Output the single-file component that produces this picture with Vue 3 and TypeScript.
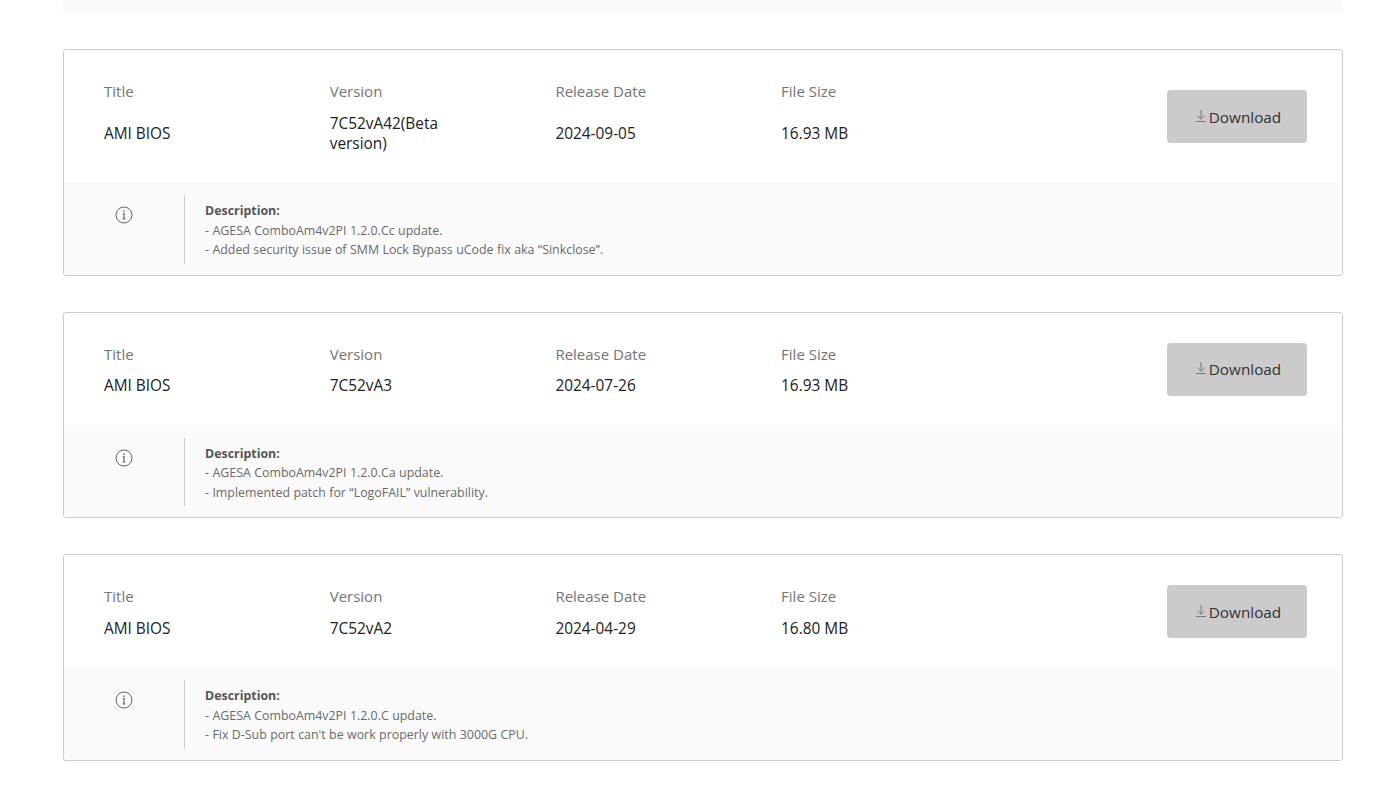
<script setup lang="ts">
interface Item { version: string; date: string; size: string; lines: string[] }
const items: Item[] = [
  { version: '7C52vA42(Beta version)', date: '2024-09-05', size: '16.93 MB', lines: ['- AGESA ComboAm4v2PI 1.2.0.Cc update.', '- Added security issue of SMM Lock Bypass uCode fix aka “Sinkclose”.'] },
  { version: '7C52vA3', date: '2024-07-26', size: '16.93 MB', lines: ['- AGESA ComboAm4v2PI 1.2.0.Ca update.', '- Implemented patch for “LogoFAIL” vulnerability.'] },
  { version: '7C52vA2', date: '2024-04-29', size: '16.80 MB', lines: ['- AGESA ComboAm4v2PI 1.2.0.C update.', '- Fix D-Sub port can\'t be work properly with 3000G CPU.'] },
]
</script>

<template>
  <main class="page">
    <div class="strip"></div>
    <section v-for="item in items" :key="item.version" class="card">
      <div class="top">
        <div class="col">
          <div class="label">Title</div>
          <div class="value">AMI BIOS</div>
        </div>
        <div class="col">
          <div class="label">Version</div>
          <div class="value narrow">{{ item.version }}</div>
        </div>
        <div class="col">
          <div class="label">Release Date</div>
          <div class="value">{{ item.date }}</div>
        </div>
        <div class="col">
          <div class="label">File Size</div>
          <div class="value">{{ item.size }}</div>
        </div>
        <button class="btn" type="button">
          <svg class="dl" viewBox="0 0 12 14" width="12" height="14" fill="none" stroke="#777" stroke-width="1">
            <path d="M6 1v9M2.5 6.8 6 10.2l3.5-3.4M1 12.5h10" />
          </svg>
          <span>Download</span>
        </button>
      </div>
      <div class="desc">
        <div class="icon-cell">
          <svg viewBox="0 0 18 18" width="18" height="18" fill="none" stroke="#666" stroke-width="1">
            <circle cx="9" cy="9" r="8" />
            <path d="M7.8 7.7H9v5.3M7.6 13h2.8" stroke-width="1.2" />
            <path d="M9 4.4v1.6" stroke-width="1.5" />
          </svg>
        </div>
        <div class="text">
          <div class="head">Description:</div>
          <div v-for="line in item.lines" :key="line">{{ line }}</div>
        </div>
      </div>
    </section>
  </main>
</template>

<style scoped>
.page {
  width: 1280px;
  margin-left: 63px;
  font-family: "Open Sans", "Noto Sans", "Liberation Sans", sans-serif;
}
.strip {
  height: 13px;
  background: #fafafa;
}
.card {
  margin-top: 36px;
  border: 1px solid #ccc;
  border-radius: 3px;
  overflow: hidden;
  background: #fff;
}
.top {
  display: flex;
  align-items: stretch;
  padding: 30px 35px 30px 40px;
}
.col {
  flex: 0 0 225.7px;
  display: flex;
  flex-direction: column;
}
.label {
  font-size: 15px;
  line-height: 22px;
  color: #757575;
  margin-bottom: 11.5px;
}
.value {
  flex: 1;
  min-height: 21px;
  margin-bottom: -1.5px;
  display: flex;
  align-items: center;
  font-size: 15.4px;
  line-height: 20.5px;
  color: #222;
}
.narrow {
  max-width: 130px;
}
.btn {
  margin-left: auto;
  align-self: center;
  width: 140px;
  height: 53px;
  border: 0;
  border-radius: 4px;
  background: #cbcbcb;
  color: #333;
  font: inherit;
  font-size: 15.3px;
  display: flex;
  align-items: center;
  justify-content: center;
  gap: 2px;
  padding: 0 0 0 2px;
}
.dl {
  margin-top: -2px;
}
.desc {
  display: flex;
  background: #fafafa;
  padding: 12px 0 11px;
}
.icon-cell {
  flex: 0 0 120px;
  border-right: 1px solid #ccc;
  box-sizing: content-box;
  display: flex;
  justify-content: center;
  align-items: flex-start;
  padding-top: 11px;
}
.text {
  padding: 6px 0 4px 20px;
  font-size: 12.4px;
  line-height: 19.5px;
  word-spacing: 0.2px;
  color: #6a6a6a;
}
.head {
  font-weight: 700;
  color: #555;
}
</style>
